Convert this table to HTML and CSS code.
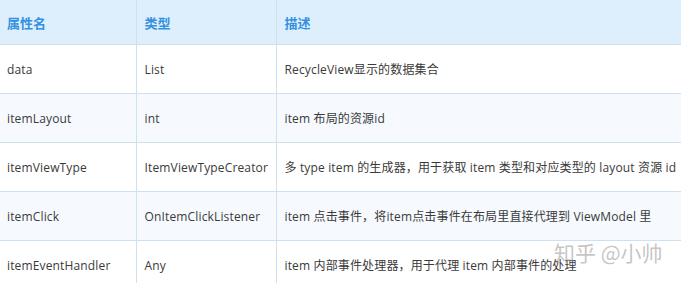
FILE: index.html
```html
<!DOCTYPE html>
<html lang="zh">
<head>
<meta charset="utf-8">
<link rel="stylesheet" href="styles.css">
</head>
<body>
<div class="wrap">
  <table class="props">
    <colgroup>
      <col class="c1"><col class="c2"><col class="c3">
    </colgroup>
    <thead>
      <tr><th>属性名</th><th>类型</th><th>描述</th></tr>
    </thead>
    <tbody>
      <tr><td>data</td><td>List</td><td>RecycleView显示的数据集合</td></tr>
      <tr><td>itemLayout</td><td>int</td><td>item 布局的资源id</td></tr>
      <tr><td>itemViewType</td><td>ItemViewTypeCreator</td><td>多 type item 的生成器，用于获取 item 类型和对应类型的 layout 资源 id</td></tr>
      <tr><td>itemClick</td><td>OnItemClickListener</td><td>item 点击事件，将item点击事件在布局里直接代理到 ViewModel 里</td></tr>
      <tr><td>itemEventHandler</td><td>Any</td><td>item 内部事件处理器，用于代理 item 内部事件的处理</td></tr>
    </tbody>
  </table>
  <div class="watermark">知乎 @小帅</div>
</div>
</body>
</html>
```
FILE: styles.css
```css
html, body {
  margin: 0;
  padding: 0;
  background: #ffffff;
}
.wrap {
  position: relative;
  width: 681px;
  height: 283px;
  overflow: hidden;
}
.props {
  border-collapse: collapse;
  table-layout: fixed;
  width: 720px;
  font-family: "Open Sans", "Noto Sans CJK SC", sans-serif;
  font-size: 12px;
  letter-spacing: 0.15px;
  color: #3a3a3a;
}
.c1 { width: 136px; }
.c2 { width: 140px; }
.c3 { width: 444px; }
.props th, .props td {
  text-align: left;
  vertical-align: middle;
  white-space: nowrap;
  padding: 0 0 0 8px;
  border: 1px solid #cde1f1;
}
.props th:first-child, .props td:first-child { border-left: none; padding-left: 7px; }
.props th {
  height: 44px;
  border-top: none;
  background: #ddeffd;
  color: #3590e0;
  font-weight: bold;
  font-size: 13px;
  letter-spacing: 0;
  font-family: "Noto Sans CJK SC", sans-serif;
}
.props td { height: 48px; }
.props tbody tr:nth-child(odd) td { background: #ffffff; }
.props tbody tr:nth-child(even) td { background: #f6faff; }
.watermark {
  position: absolute;
  left: 554px;
  top: 237px;
  font-family: "Noto Sans CJK SC", sans-serif;
  font-size: 21px;
  color: rgba(140, 140, 140, 0.5);
}
```
